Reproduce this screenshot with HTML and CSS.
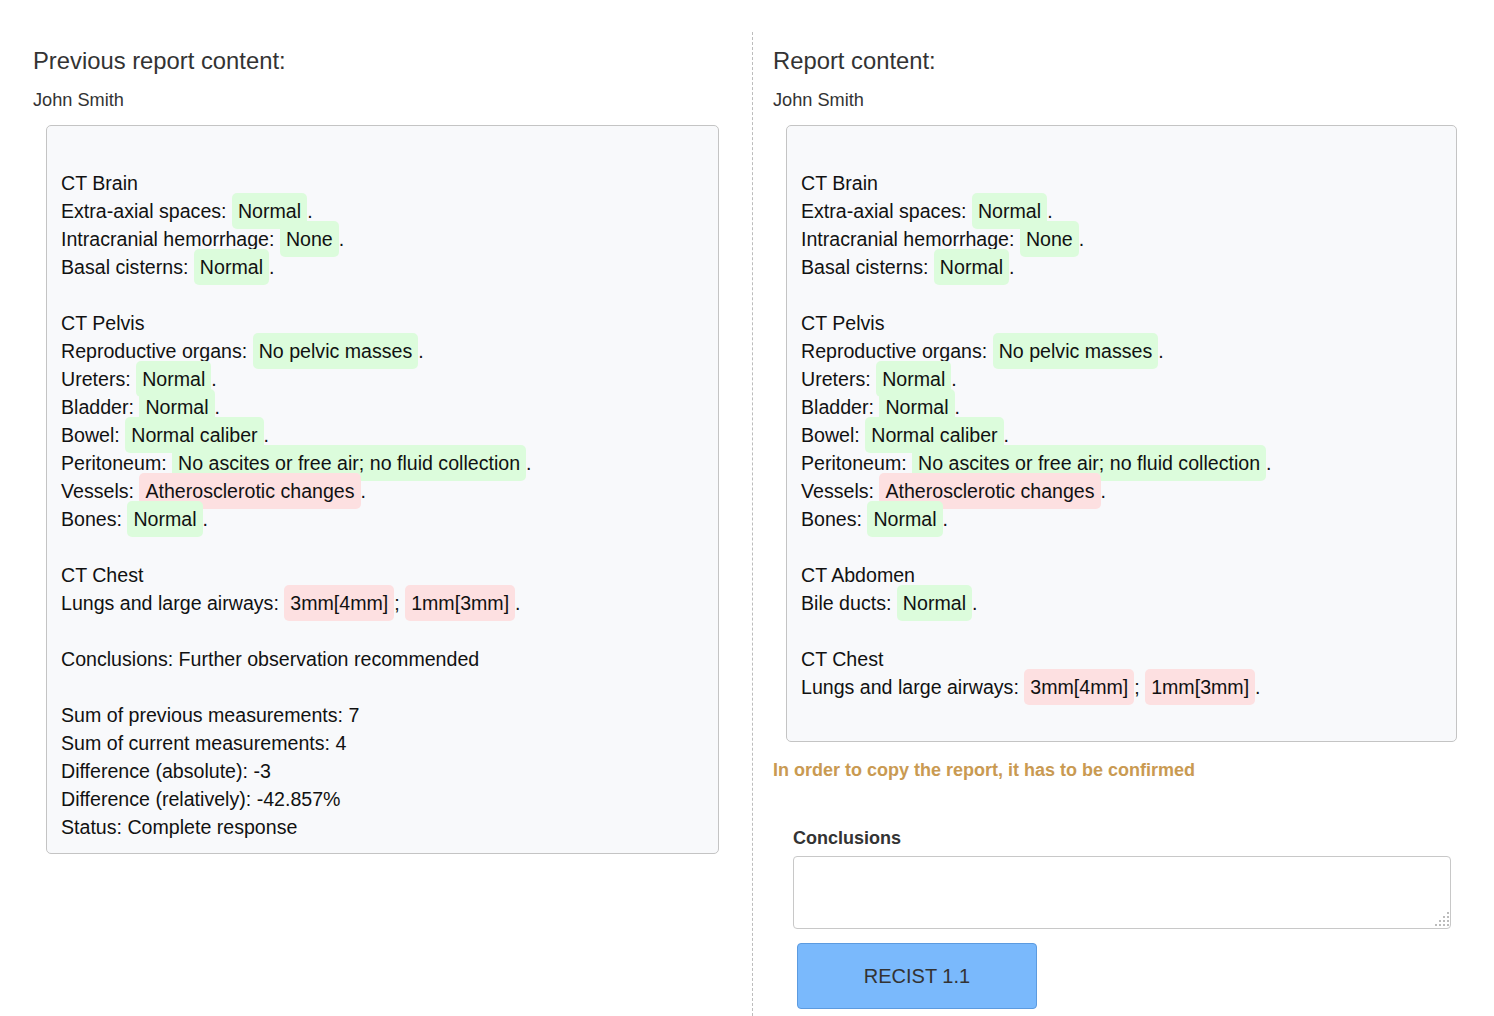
FILE: index.html
```html
<!DOCTYPE html>
<html>
<head>
<meta charset="utf-8">
<link rel="stylesheet" href="styles.css">
</head>
<body>
<div class="page">
  <section class="col col-left">
    <h2 class="title">Previous report content:</h2>
    <div class="patient">John Smith</div>
    <div class="report">
      <div class="ln"></div>
      <div class="ln">CT Brain</div>
      <div class="ln">Extra-axial spaces: <span class="chip ok">Normal</span>.</div>
      <div class="ln">Intracranial hemorrhage: <span class="chip ok">None</span>.</div>
      <div class="ln">Basal cisterns: <span class="chip ok">Normal</span>.</div>
      <div class="ln"></div>
      <div class="ln">CT Pelvis</div>
      <div class="ln">Reproductive organs: <span class="chip ok">No pelvic masses</span>.</div>
      <div class="ln">Ureters: <span class="chip ok">Normal</span>.</div>
      <div class="ln">Bladder: <span class="chip ok">Normal</span>.</div>
      <div class="ln">Bowel: <span class="chip ok">Normal caliber</span>.</div>
      <div class="ln">Peritoneum: <span class="chip ok">No ascites or free air; no fluid collection</span>.</div>
      <div class="ln">Vessels: <span class="chip bad">Atherosclerotic changes</span>.</div>
      <div class="ln">Bones: <span class="chip ok">Normal</span>.</div>
      <div class="ln"></div>
      <div class="ln">CT Chest</div>
      <div class="ln">Lungs and large airways: <span class="chip bad">3mm[4mm]</span>; <span class="chip bad">1mm[3mm]</span>.</div>
      <div class="ln"></div>
      <div class="ln">Conclusions: Further observation recommended</div>
      <div class="ln"></div>
      <div class="ln">Sum of previous measurements: 7</div>
      <div class="ln">Sum of current measurements: 4</div>
      <div class="ln">Difference (absolute): -3</div>
      <div class="ln">Difference (relatively): -42.857%</div>
      <div class="ln">Status: Complete response</div>
    </div>
  </section>
  <section class="col col-right">
    <h2 class="title">Report content:</h2>
    <div class="patient">John Smith</div>
    <div class="report">
      <div class="ln"></div>
      <div class="ln">CT Brain</div>
      <div class="ln">Extra-axial spaces: <span class="chip ok">Normal</span>.</div>
      <div class="ln">Intracranial hemorrhage: <span class="chip ok">None</span>.</div>
      <div class="ln">Basal cisterns: <span class="chip ok">Normal</span>.</div>
      <div class="ln"></div>
      <div class="ln">CT Pelvis</div>
      <div class="ln">Reproductive organs: <span class="chip ok">No pelvic masses</span>.</div>
      <div class="ln">Ureters: <span class="chip ok">Normal</span>.</div>
      <div class="ln">Bladder: <span class="chip ok">Normal</span>.</div>
      <div class="ln">Bowel: <span class="chip ok">Normal caliber</span>.</div>
      <div class="ln">Peritoneum: <span class="chip ok">No ascites or free air; no fluid collection</span>.</div>
      <div class="ln">Vessels: <span class="chip bad">Atherosclerotic changes</span>.</div>
      <div class="ln">Bones: <span class="chip ok">Normal</span>.</div>
      <div class="ln"></div>
      <div class="ln">CT Abdomen</div>
      <div class="ln">Bile ducts: <span class="chip ok">Normal</span>.</div>
      <div class="ln"></div>
      <div class="ln">CT Chest</div>
      <div class="ln">Lungs and large airways: <span class="chip bad">3mm[4mm]</span>; <span class="chip bad">1mm[3mm]</span>.</div>
      <div class="ln"></div>
    </div>
    <div class="warning">In order to copy the report, it has to be confirmed</div>
    <div class="form">
      <label class="label">Conclusions</label>
      <div class="input-wrap">
        <textarea class="input"></textarea>
        <svg class="grip" width="14" height="14" viewBox="0 0 14 14" aria-hidden="true">
          <rect x="12" y="0" width="2" height="2"/>
          <rect x="8" y="4" width="2" height="2"/><rect x="12" y="4" width="2" height="2"/>
          <rect x="4" y="8" width="2" height="2"/><rect x="8" y="8" width="2" height="2"/><rect x="12" y="8" width="2" height="2"/>
          <rect x="0" y="12" width="2" height="2"/><rect x="4" y="12" width="2" height="2"/><rect x="8" y="12" width="2" height="2"/><rect x="12" y="12" width="2" height="2"/>
        </svg>
      </div>
      <button class="btn">RECIST 1.1</button>
    </div>
  </section>
</div>
</body>
</html>
```

FILE: styles.css
```css
html, body {
  margin: 0;
  padding: 0;
  background: #ffffff;
}
body {
  font-family: "Liberation Sans", Arial, sans-serif;
  color: #333333;
}
.page {
  display: flex;
  align-items: stretch;
  min-height: 1016px;
}
.col {
  box-sizing: border-box;
}
.col-left {
  width: 752px;
  padding: 32px 33px 0 33px;
}
.col-right {
  flex: 1;
  margin-top: 32px;
  border-left: 1px dashed #bdbdbd;
  padding: 0 37px 0 20px;
}
.title {
  margin: 0;
  padding-top: 15px;
  font-size: 23.8px;
  font-weight: normal;
  line-height: 28px;
  color: #333333;
}
.patient {
  font-size: 18.2px;
  line-height: 22px;
  margin-top: 14px;
  color: #333333;
}
.report {
  margin: 14px 0 0 13px;
  border: 1px solid #c4c4c4;
  border-radius: 5px;
  background: #f8f9fb;
  padding: 15px 14px 12px 14px;
  font-size: 19.6px;
  line-height: 28px;
  color: #111111;
}
.ln {
  min-height: 28px;
  white-space: nowrap;
}
.chip {
  padding: 7px 6px;
  border-radius: 5px;
}
.ok {
  background: #dcfcdc;
}
.bad {
  background: #fde0e1;
}
.warning {
  margin-top: 17px;
  font-size: 18px;
  font-weight: bold;
  line-height: 22px;
  color: #c99a52;
}
.form {
  padding: 46px 0 0 20px;
  margin-right: 6px;
  display: flex;
  flex-direction: column;
  align-items: flex-start;
}
.label {
  font-size: 18px;
  font-weight: bold;
  line-height: 22px;
  color: #333333;
}
.input-wrap {
  position: relative;
  width: 100%;
  margin-top: 7px;
}
.input {
  display: block;
  box-sizing: border-box;
  width: 100%;
  height: 73px;
  margin: 0;
  border: 1px solid #c8c8c8;
  border-radius: 4px;
  background: #ffffff;
  font-family: "Liberation Sans", Arial, sans-serif;
  font-size: 16px;
  padding: 6px 10px;
  resize: none;
}
.grip {
  position: absolute;
  right: 2px;
  bottom: 3px;
  fill: #bcbcbc;
}
.btn {
  margin: 14px 0 0 4px;
  width: 240px;
  height: 66px;
  background: #7ab9fc;
  border: 1px solid #5c9be0;
  border-radius: 4px;
  font-family: "Liberation Sans", Arial, sans-serif;
  font-size: 20px;
  color: #333333;
}
```
